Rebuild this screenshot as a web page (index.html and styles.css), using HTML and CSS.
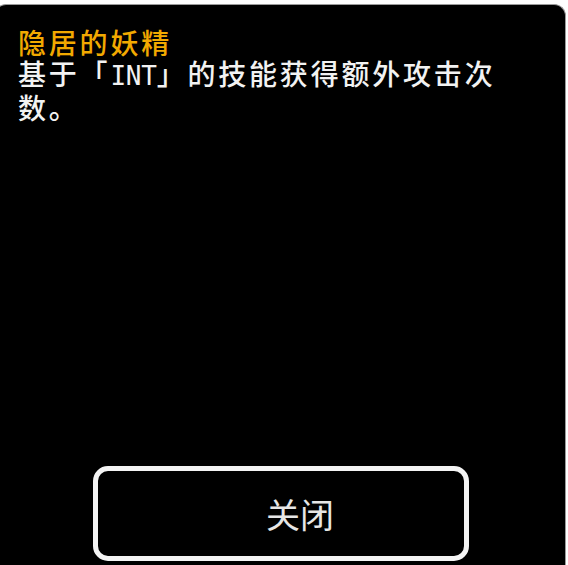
FILE: index.html
```html
<!DOCTYPE html>
<html lang="zh">
<head>
<meta charset="utf-8">
<title>隐居的妖精</title>
<link rel="stylesheet" href="styles.css">
</head>
<body>
<div class="panel">
  <div class="desc">
    <div class="title">隐居的妖精</div>
    <div class="text">基于「<span class="latin">INT</span>」的技能获得额外攻击次数。</div>
  </div>
  <button class="close">关闭</button>
</div>
</body>
</html>
```
FILE: styles.css
```css
html, body {
  margin: 0;
  padding: 0;
  background: #ffffff;
  overflow: hidden;
  height: 565px;
}
.panel {
  box-sizing: border-box;
  margin: 4px 0 0 -6px;
  width: 572px;
  height: 561px;
  background: #000;
  border: 1px solid #9a9a9a;
  border-bottom: none;
  border-radius: 12px 12px 0 0;
  display: flex;
  flex-direction: column;
}
.desc {
  padding: 22px 0 0 23px;
  width: 494px;
  font-family: "Noto Sans CJK SC", "Noto Sans", sans-serif;
  font-size: 28px;
  font-weight: 500;
  line-height: 31px;
  letter-spacing: 2.8px;
}
.title {
  color: #f2a900;
}
.text {
  color: #f2f2f2;
}
.latin {
  font-family: "DejaVu Sans Mono", monospace;
  font-size: 26px;
  letter-spacing: -0.25px;
}
.close {
  margin: auto 0 4px 98px;
  box-sizing: border-box;
  width: 376px;
  height: 95px;
  background: #000;
  border: 5px solid #f4f4f4;
  border-radius: 15px;
  color: #e6e6e6;
  font-family: "Noto Sans CJK SC", sans-serif;
  font-size: 34px;
  padding: 0 0 0 38px;
  display: flex;
  align-items: center;
  justify-content: center;
}
```
